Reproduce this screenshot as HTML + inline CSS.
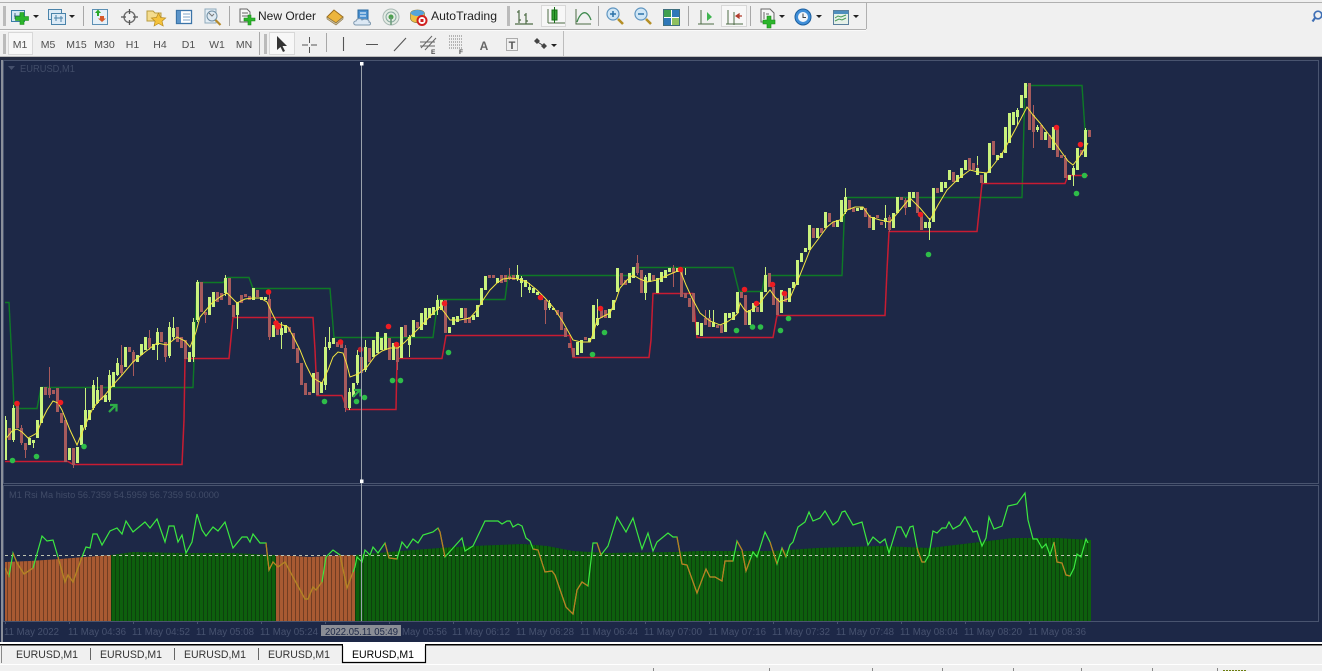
<!DOCTYPE html>
<html><head><meta charset="utf-8"><title>MetaTrader EURUSD,M1</title>
<style>html,body{margin:0;padding:0;background:#f0f0f0;width:1322px;height:671px;overflow:hidden}svg{display:block}text{font-family:"Liberation Sans",sans-serif}</style></head>
<body>
<svg xmlns="http://www.w3.org/2000/svg" width="1322" height="671" viewBox="0 0 1322 671">
<defs>
<pattern id="st" width="4" height="10" patternUnits="userSpaceOnUse"><rect x="3" width="1" height="10" fill="#000" opacity=".32"/></pattern>
<filter id="b" x="0" y="0" width="100%" height="100%"><feGaussianBlur stdDeviation=".35"/></filter>
</defs>
<rect width="1322" height="671" fill="#f0f0f0"/>
<!-- toolbars frame -->
<path d="M0 2.500H1322M0 29.500H866M866.500 3V29" fill="none" stroke="#b0b0b0"/>
<path d="M0 30.500H866" stroke="#fafafa"/>
<path d="M563.500 31V56M0 56.500H1322" stroke="#bcbcbc" fill="none"/>
<g fill="#bbb"><rect x="3" y="6" width="3" height="20"/><rect x="3" y="34" width="3" height="20"/><rect x="264" y="34" width="3" height="20"/><rect x="507" y="6" width="3" height="20"/></g>
<g stroke="#a8a8a8"><path d="M83.500 6V26M229.500 6V26M598.500 6V26M688.500 6V26M750.500 6V26M259.500 32V55M326.500 33V52"/></g>
<!-- pressed boxes -->
<g fill="#f7f7f7" stroke="#d8d8d8"><rect x="8.500" y="32.500" width="24" height="22"/><rect x="269.500" y="32.500" width="25" height="22"/><rect x="541.500" y="5.500" width="24" height="21"/><rect x="721.500" y="5.500" width="25" height="21"/></g>
<!-- toolbar 1 icons -->
<g>
<rect x="11.500" y="10.500" width="13" height="11" fill="#d4e6f4" stroke="#3b7ea8"/><path d="M14 16h8M15 13v6M20 14v5" stroke="#45708a" fill="none"/>
<path d="M20 12.500h4v4h4.500v4H24v4h-4v-4h-4.500v-4H20z" fill="#2cb52c" stroke="#178a17" stroke-width=".6"/>
<path d="M33 15h6l-3 3z" fill="#222"/>
<rect x="48.500" y="9.500" width="13" height="10" fill="#dceaf6" stroke="#4a83aa"/><rect x="51.500" y="13.500" width="14" height="11" fill="#dceaf6" stroke="#4a83aa"/><path d="M54 18h9M56 15v6M61 16v6" stroke="#4a83aa" fill="none"/>
<path d="M69 15h6l-3 3z" fill="#222"/>
<rect x="92.500" y="9.500" width="15" height="15" fill="#e6f0f8" stroke="#5c90b5"/><path d="M95 13l3-3.500 3 3.500h-2v3h-2v-3z" fill="#2aa82a"/><path d="M100 16h4v2.500h2l-4 3.500-4-3.500h2z" fill="#d75a2a"/>
<circle cx="129.500" cy="17" r="5.500" fill="none" stroke="#6b6b6b" stroke-width="1.300"/><path d="M129.500 9v5M129.500 20v5M121 17h5M133 17h5" stroke="#555" stroke-width="1.300"/>
<path d="M147 11h6l2 2h6v8h-14z" fill="#f4dc8e" stroke="#b89b3f"/><path d="M158.500 13l2.200 4.500 5 .5-3.700 3.200 1.200 4.800-4.700-2.500-4.400 2.500 1-4.800-3.700-3.200 5-.5z" fill="#f4c23c" stroke="#b88a1e" stroke-width=".7"/>
<rect x="176.500" y="10.500" width="15" height="13" fill="#fff" stroke="#3b74a8" stroke-width="1.300"/><rect x="177" y="11" width="4" height="12" fill="#5b94c9"/><path d="M183 14h7M183 17h7M183 20h7" stroke="#7fa5c8"/>
<rect x="205" y="9" width="11" height="14" fill="#e3edf5" stroke="#8faabc"/><circle cx="212" cy="16" r="5" fill="#dfeaf2" stroke="#6f8ea3"/><path d="M215.500 20l5 5" stroke="#b58a2c" stroke-width="2.200"/><path d="M209 13l3 3 2-2" stroke="#777" fill="none"/>
<path d="M240 9h7l3 3v10h-10z" fill="#f7f7f7" stroke="#666"/><path d="M242 13h6M242 16h6" stroke="#666"/><path d="M248 15h3v3h4v3h-4v4h-3v-4h-4v-3h4z" fill="#2cb52c" stroke="#178a17" stroke-width=".6"/>
<path d="M327 17l7-7 9 7-7 6z" fill="#edb53c" stroke="#9a6c1c"/><path d="M327 17v2l9 6 7-6v-2l-7 6z" fill="#c9c0a6" stroke="#8d7540" stroke-width=".6"/>
<path d="M358 10h10v11h-10z" fill="#4a90d0" stroke="#2a6aa0"/><path d="M360 13h6M360 16h6" stroke="#fff"/><path d="M356 25c-3 0-3-4 0-4 1-3 5-3 6-1 3-2 8 0 7 2 2 0 2 3 0 3z" fill="#dce8f4" stroke="#7d97ae"/>
<circle cx="391" cy="17" r="8" fill="#e4ece4" stroke="#a9b9b4"/><circle cx="391" cy="17" r="5" fill="none" stroke="#88a8a0"/><circle cx="391" cy="17" r="2.500" fill="#4ca04c"/><path d="M391 17v8" stroke="#6a9a7a" stroke-width="1.500"/>
<path d="M410.500 13c2-4 12-4 14 0v6c-2 5-12 5-14 0z" fill="#ecc045" stroke="#8c7a3a" stroke-width=".7"/><path d="M410.500 13c2-4 12-4 14 0-2 4-12 4-14 0z" fill="#55a4db"/><circle cx="422" cy="20.500" r="4.500" fill="#fff" stroke="#d02020" stroke-width="2"/><rect x="420.500" y="19" width="3" height="3" fill="#d02020"/>
<path d="M519 10v13M519 12h-2M519 20h2M526 13v11M526 15h-2M526 21h2M515 24h18" stroke="#4d6b45" fill="none" stroke-width="1.200"/>
<path d="M548 9v14M548 23h17" stroke="#4d6b45" fill="none"/><rect x="552" y="10" width="5" height="10" fill="#35a335" stroke="#156f15"/><path d="M554.500 7v16" stroke="#156f15"/>
<path d="M576 9v15h15" stroke="#4d6b45" fill="none"/><path d="M577 22c3-9 7-10 9-9s4 4 5 7" stroke="#3f8a4f" fill="none" stroke-width="1.300"/>
<circle cx="613" cy="14" r="6" fill="#cfe6f6" stroke="#5f95c0" stroke-width="1.200"/><path d="M610 14h6M613 11v6" stroke="#2b72a8" stroke-width="1.500"/><path d="M618 19l5 5" stroke="#b58f26" stroke-width="2.600"/>
<circle cx="641" cy="14" r="6" fill="#cfe6f6" stroke="#5f95c0" stroke-width="1.200"/><path d="M638 14h6" stroke="#2b72a8" stroke-width="1.500"/><path d="M646 19l5 5" stroke="#b58f26" stroke-width="2.600"/>
<rect x="663.500" y="9.500" width="16" height="16" fill="#fff" stroke="#3f6f7f"/><rect x="664" y="10" width="7" height="7" fill="#3fa04f"/><rect x="672" y="10" width="7" height="7" fill="#2f78b8"/><rect x="664" y="18" width="7" height="7" fill="#2f78b8"/><rect x="672" y="18" width="7" height="7" fill="#8fc060"/>
<path d="M701 10v14M698 24h16" stroke="#4d6b45" fill="none"/><path d="M707 12l5 5-5 4z" fill="#3fb54f"/>
<path d="M728 10v14M734 12v13M726 24h17" stroke="#4d6b45" fill="none"/><path d="M736 16h6M736 16l3-2v4z" stroke="#b03a2a" fill="none" stroke-width="1.200"/>
<path d="M761 9h9l4 4v9h-13z" fill="#f5f5f5" stroke="#666"/><path d="M764 12v7M766 14h3" stroke="#666"/><path d="M767 16h4v4h4v4h-4v4h-4v-4h-4v-4h4z" fill="#2cb52c" stroke="#178a17" stroke-width=".6"/>
<path d="M779 15h6l-3 3z" fill="#222"/>
<circle cx="803" cy="17" r="8" fill="#3f8ed8" stroke="#1c5f9e"/><circle cx="803" cy="17" r="5" fill="#f2f6fa"/><path d="M803 13.500v4h3" stroke="#444" fill="none"/>
<path d="M816 15h6l-3 3z" fill="#222"/>
<rect x="833.500" y="10.500" width="15" height="14" fill="#e5f0e8" stroke="#5a7f9d"/><rect x="834" y="11" width="14" height="3" fill="#4f8fbe"/><path d="M835 18l3-2 3 1 5-2M835 21l4-2 3 1 4-2" stroke="#4a9a58" fill="none"/>
<path d="M853 15h6l-3 3z" fill="#222"/>
</g>
<text x="258" y="20" font-size="12" fill="#222" textLength="58" lengthAdjust="spacingAndGlyphs">New Order</text>
<text x="431" y="20" font-size="12" fill="#222" textLength="66" lengthAdjust="spacingAndGlyphs">AutoTrading</text>
<circle cx="1318" cy="15" r="3.800" fill="none" stroke="#3f6fb5" stroke-width="1.700"/><path d="M1315 18l-2.500 3.500" stroke="#3f6fb5" stroke-width="2.200"/>
<!-- toolbar 2 -->
<g font-size="10.500" fill="#505050" text-anchor="middle">
<text x="20" y="48">M1</text><text x="48" y="48">M5</text><text x="76.500" y="48">M15</text><text x="104.500" y="48">M30</text><text x="132.500" y="48">H1</text><text x="160" y="48">H4</text><text x="188.500" y="48">D1</text><text x="217" y="48">W1</text><text x="244" y="48">MN</text>
</g>
<path d="M277 36v14l3.500-3 2.500 5 2-1-2.500-5h4.500z" fill="#333"/>
<path d="M309.500 37v6M309.500 47v6M302 45h6M311 45h6" stroke="#555"/>
<path d="M343.500 37v14M366 44.500h12M394 51l12-13" stroke="#555" stroke-width="1.100" fill="none"/>
<path d="M421 48l11-12M425 50l11-12M420 42h15M420 46h15" stroke="#666" fill="none"/><text x="431" y="54" font-size="6.500" font-weight="bold" fill="#444">E</text>
<path d="M449 36h14M449 39h14M449 42h14M449 45h14M449 48h14" stroke="#777" stroke-dasharray="1 1"/><text x="459" y="54" font-size="6.500" font-weight="bold" fill="#444">F</text>
<text x="484" y="50" font-size="12" font-weight="bold" fill="#666" text-anchor="middle">A</text>
<rect x="506.500" y="38.500" width="11" height="12" fill="none" stroke="#666" stroke-dasharray="1 1"/><text x="512" y="49" font-size="11" font-weight="bold" fill="#555" text-anchor="middle">T</text>
<path d="M537 38l3 3-3 3-3-3zM544 43l3 3-3 3-3-3z" fill="#444"/><path d="M536 41l8 5" stroke="#444"/>
<path d="M551 44h6l-3 3z" fill="#222"/>
<!-- chart -->
<rect x="0" y="57" width="1322" height="585" fill="#1d2847"/>
<rect x="0" y="57" width="1322" height="3" fill="#252c40"/>
<rect x="1" y="60" width="2" height="582" fill="#8a8f9a"/>
<g fill="none" stroke="#49546f"><rect x="3.500" y="60.500" width="1315" height="423"/><rect x="3.500" y="485.500" width="1315" height="136"/></g>
<path d="M8 66h7l-3.500 4z" fill="#45506c"/>
<text x="20" y="72" font-size="10" fill="#414c68" textLength="55" lengthAdjust="spacingAndGlyphs">EURUSD,M1</text>
<g filter="url(#b)">
<!-- stop lines -->
<path fill="none" stroke="#0f7a26" stroke-width="1.400" d="M5 302.500H9L13 383 14 408.500H37L41 387.500H193L197 282.500H223L227 277.500H249L253 288.500H330L334 337.500H433L438 299.500H505L508 275.500H630L635 267.500H733L739 291.500H762L765 275.500H842L845 197.500H1022L1025 85.500H1082L1085 130.500H1090"/>
<path fill="none" stroke="#c81c30" stroke-width="1.500" d="M5 461.500H68L73 464.500H182L184 420 185 358.500H229L233 317.500H313L315 350 317 395.500H342L347 409.500H396L397 358.500H442L446 335.500H570L573 357.500H649L651 340 653 293.500H693L697 337.500H773L777 315.500H885L887 270 889 231.500H977L982 183.500H1065L1068 175.500H1088"/>
<!-- wicks -->
<path fill="none" stroke="#c8f07c" d="M5.500 416V460M13.500 405V442M33.500 440V448M85.500 388V430M93.500 380V410M97.500 377V404M109.500 370V402M117.500 358V376M157.500 328V360M169.500 322V358M173.500 317V340M193.500 318V362M197.500 280V322M225.500 275V296M237.500 302V329M281.500 322V349M329.500 327V350M325.500 337V390M349.500 388V410M357.500 350V385M365.500 340V372M409.500 335V357M437.500 295V315M517.500 265V281M521.500 276V297M529.500 283V293M549.500 300V310M597.500 299V326M645.500 275V300M685.500 268V275M709.500 310V318M713.500 310V322M765.500 267V292M845.500 188V214M885.500 205V228M929.500 218V240M977.500 156V175M1017.500 108V125M1037.500 125V132M1073.500 166V186M1085.500 128V157"/>
<path fill="none" stroke="#a85a5c" d="M49.500 367V398M21.500 425V445M25.500 443V458M73.500 448V468M121.500 345V375M133.500 350V376M149.500 330V350M165.500 342V362M205.500 312V323M269.500 290V340M345.500 345V412M397.500 343V370M509.500 268V280M545.500 300V324M637.500 255V275M673.500 265V287M705.500 310V322M889.500 215V232M977.500 165V170M1033.500 105V148M1065.500 155V178M905.500 198V215"/>
<!-- bull bodies -->
<path fill="none" stroke="#c9f27d" stroke-width="3" d="M5.500 420V460M13.500 408V440M29.500 438V445M33.500 440V443M37.500 420V438M41.500 387V423M69.500 448V460M77.500 447V463M81.500 425V445M85.500 410V427M89.500 410V420M93.500 385V408M97.500 390V403M105.500 395V402M109.500 375V400M113.500 372V387M117.500 363V375M125.500 347V367M137.500 355V362M141.500 344V355M145.500 337V350M153.500 344V350M157.500 332V345M169.500 327V356M173.500 328V337M189.500 352V362M193.500 322V357M197.500 282V320M209.500 297V315M213.500 292V307M225.500 278V293M237.500 302V315M253.500 288V300M261.500 297V300M265.500 297V300M273.500 325V337M281.500 328V335M285.500 325V333M313.500 373V393M321.500 382V393M325.500 347V385M329.500 342V348M333.500 338V344M349.500 392V408M353.500 383V397M357.500 355V383M365.500 347V370
M373.500 340V357M377.500 332V353M381.500 338V350M385.500 333V350M393.500 343V360M401.500 327V358M409.500 337V345M413.500 320V337M421.500 313V330M425.500 308V325M429.500 308V318M433.500 307V315M437.500 300V310M441.500 300V310M449.500 327V333M453.500 317V325M457.500 316V322M461.500 308V318M473.500 315V320M477.500 305V317M481.500 288V305M485.500 276V290M497.500 278V283M517.500 275V279M521.500 278V283M525.500 280V287M529.500 287V290M533.500 288V293M537.500 292V295M549.500 303V308M553.500 308V310M577.500 342V355M581.500 340V353M589.500 338V342M593.500 305V339M597.500 318V325M609.500 309V318M613.500 300V310M617.500 268V292M629.500 273V283M633.500 267V278M645.500 277V293M649.500 273V282M657.500 278V293M661.500 272V282M665.500 270V278M669.500 268V272M677.500 268V272M697.500 322V335M701.500 323V336M713.500 322V327M725.500 313V332M729.500 313V318M733.500 312V320M737.500 292V313
M749.500 310V325M753.500 303V312M761.500 292V312M765.500 275V292M781.500 290V313M789.500 288V302M793.500 282V288M797.500 260V285M801.500 253V262M805.500 248V252M809.500 225V250M817.500 228V238M825.500 212V228M837.500 220V227M841.500 200V222M845.500 197V212M857.500 208V211M861.500 207V210M873.500 217V230M885.500 218V222M893.500 213V228M897.500 197V213M909.500 192V207M913.500 192V198M925.500 222V228M929.500 222V228M933.500 188V222M941.500 182V192M945.500 182V188M949.500 170V180M957.500 175V182M961.500 168V178M965.500 160V170M977.500 168V175M985.500 173V183M989.500 143V173M997.500 155V160M1001.500 153V158M1005.500 127V153M1009.500 113V143M1013.500 112V125M1017.500 110V117M1021.500 95V108M1025.500 83V98M1037.500 127V130M1045.500 132V140M1053.500 127V150M1069.500 175V180M1073.500 168V175M1077.500 148V170M1085.500 130V157"/>
<!-- bear bodies -->
<path fill="none" stroke="#a65a5c" stroke-width="3" d="M9.500 428V440M17.500 405V428M21.500 428V443M25.500 443V450M45.500 387V395M49.500 388V395M53.500 390V394M57.500 388V412M61.500 413V423M65.500 420V462M73.500 448V465M101.500 385V400M121.500 365V373M129.500 347V352M133.500 352V362M149.500 338V348M161.500 332V342M165.500 342V357M177.500 327V342M181.500 337V348M185.500 340V359M201.500 282V312M205.500 312V315M217.500 292V302M221.500 293V300M229.500 278V305M233.500 305V317M241.500 295V303M245.500 294V297M249.500 296V300M257.500 290V297M269.500 299V337M277.500 323V335M289.500 327V332M293.500 333V349M297.500 348V363M301.500 363V385M305.500 383V395M309.500 392V395M317.500 372V395M337.500 342V347M341.500 343V348M345.500 348V408M361.500 357V373M369.500 348V362
M389.500 338V360M397.500 343V362M405.500 325V337M417.500 322V328M445.500 300V333M465.500 308V323M469.500 317V323M489.500 275V278M493.500 275V278M501.500 275V283M505.500 275V282M509.500 276V279M513.500 275V280M541.500 295V300M545.500 300V310M557.500 310V315M561.500 312V330M565.500 328V337M569.500 343V348M573.500 348V357M585.500 337V340M601.500 310V318M605.500 310V318M621.500 273V285M625.500 280V285M637.500 263V273M641.500 270V293M653.500 275V280M673.500 268V273M681.500 270V297M685.500 293V298M689.500 298V307M693.500 293V322M705.500 318V325M709.500 318V327M717.500 325V328M721.500 325V333
M741.500 292V298M745.500 295V325M757.500 307V312M769.500 273V287M773.500 287V305M777.500 298V315M785.500 292V302M813.500 228V238M821.500 228V233M829.500 213V222M833.500 222V227M849.500 200V210M853.500 208V212M865.500 208V217M869.500 215V228M877.500 215V218M881.500 222V225M889.500 217V230M901.500 197V200M905.500 200V208M917.500 192V213M921.500 215V230M937.500 188V193M953.500 172V182M969.500 158V170M973.500 163V170M981.500 175V183M993.500 141V155M1029.500 83V130M1033.500 115V132M1041.500 125V140M1049.500 135V148M1057.500 127V157M1061.500 155V158M1065.500 158V178M1081.500 150V155M1089.500 130V137"/>
<!-- MA -->
<path fill="none" stroke="#f4e640" stroke-width="1" d="M5 440 12 431 17 429 22 432 28 438 37 433 42 420 47 410 53 401 58 403 62 410 70 430 77 445 84 428 92 410 97 403 105 395 113 385 122 375 133 362 145 352 157 343 167 345 177 337 185 341 190 347 196 332 200 317 212 303 220 297 227 293 232 298 237 303 245 299 253 298 260 298 267 302 272 313 277 323 288 327 294 338 300 350 306 365 312 377 318 381 322 383 328 370 333 357 338 352 343 353 347 365 350 377 358 374 367 367 375 356 382 351 390 348 398 348 405 342 410 337 420 327 433 313 440 307 445 313 450 320 460 320 470 318 477 310 483 300 490 290 497 283 503 279 510 278 518 279 527 282 537 290 545 298 553 307 563 322 573 340 581 342 590 342 594 331 597 320 604 316 610 313 616 300 620 288 627 280 633 275 640 279 647 282 652 281 657 280 668 275 680 270 686 285 692 298 700 313 710 321 720 325 727 322 733 318 738 313 740 303 744 309 747 312 753 309 760 303 765 296 770 290 775 297 780 302 785 300 790 298 800 275 810 250 819 238 827 227 833 222 840 220 847 210 855 207 863 207 870 217 880 220 890 222 900 210 910 198 920 208 930 220 938 205 947 190 958 179 970 170 978 172 987 173 995 163 1003 152 1015 130 1027 107 1033 115 1040 123 1050 136 1060 150 1068 161 1073 165 1080 156 1088 143"/>
<!-- green dots -->
<g fill="#2fbd48"><circle cx="12.500" cy="460.500" r="2.800"/><circle cx="36.500" cy="456.500" r="2.800"/><circle cx="84" cy="446.500" r="2.800"/><circle cx="324.500" cy="401.500" r="2.800"/><circle cx="356.500" cy="401.500" r="2.800"/><circle cx="364.500" cy="397.500" r="2.800"/><circle cx="392.500" cy="380.500" r="2.800"/><circle cx="400.500" cy="380.500" r="2.800"/><circle cx="448.500" cy="352.500" r="2.800"/><circle cx="592.500" cy="354.500" r="2.800"/><circle cx="604.500" cy="332.500" r="2.800"/><circle cx="736.500" cy="330.500" r="2.800"/><circle cx="752.500" cy="327" r="2.800"/><circle cx="760.500" cy="327" r="2.800"/><circle cx="780.500" cy="330.500" r="2.800"/><circle cx="788.500" cy="318.500" r="2.800"/><circle cx="928.500" cy="254.500" r="2.800"/><circle cx="1076.500" cy="193.500" r="2.800"/><circle cx="1084.500" cy="175.500" r="2.800"/></g>
<!-- red dots -->
<g fill="#ee1a22"><circle cx="17" cy="403.500" r="2.800"/><circle cx="60.500" cy="402.500" r="2.800"/><circle cx="268.500" cy="292" r="2.800"/><circle cx="276" cy="323" r="2.800"/><circle cx="278" cy="326.500" r="3.200"/><circle cx="340.500" cy="342" r="2.800"/><circle cx="360.500" cy="349.500" r="2.800" opacity=".75"/><circle cx="388.500" cy="326.500" r="2.800"/><circle cx="396.500" cy="344.500" r="2.800"/><circle cx="444.500" cy="303.500" r="2.800"/><circle cx="540.500" cy="297.500" r="2.800"/><circle cx="600.500" cy="308.500" r="2.800"/><circle cx="680.500" cy="269.500" r="2.800"/><circle cx="744.500" cy="289.500" r="2.800"/><circle cx="756.500" cy="303.500" r="2.800"/><circle cx="772.500" cy="284.500" r="2.800"/><circle cx="784.500" cy="293.500" r="2.800"/><circle cx="920.500" cy="214.500" r="2.800"/><circle cx="1056.500" cy="127.500" r="2.800"/><circle cx="1080.500" cy="144.500" r="2.800"/></g>
<!-- arrows -->
<g fill="none" stroke="#2fae46" stroke-width="2.200"><path d="M109 412l7-7M110 405h6.500v6.500"/><path d="M353 397l7-7M354 390h6.500v6.500"/></g>
<!-- histogram -->
<path fill="#a85a33" d="M5 621V562L30 561 60 559 85 557 111 555V621Z"/>
<path fill="#a85a33" d="M276 621V555L310 557 328 556 355 555V621Z"/>
<path fill="#0a5f10" d="M111 621V555L133 552 180 553 233 553 273 555 276 555V621Z"/>
<path fill="#0a5f10" d="M355 621V555L400 551 440 548 473 546 523 544 547 546 573 551 607 553 673 552 700 551 773 551 817 548 880 546 930 548 980 542 1013 538 1057 538 1091 540V621Z"/>
<path fill="url(#st)" d="M5 621V562L30 561 60 559 85 557 111 555 133 552 180 553 233 553 273 555 310 557 328 556 355 555 400 551 440 548 473 546 523 544 547 546 573 551 607 553 673 552 700 551 773 551 817 548 880 546 930 548 980 542 1013 538 1057 538 1091 540V621Z"/>
<path d="M5 555.500H1088" stroke="#bfc4b2" stroke-dasharray="3 3"/>
<!-- RSI -->
<path fill="none" stroke="#3be83f" stroke-width="1.200" d="M5 568 9 576 13 553 17 563 24 574 33 568 42 536 47 541 53 540 58 557 65 582 68 575 73 582 82 557 86 547 90 548 93 534 97 534 102 545 110 531 117 528 122 534 126 521 133 532 145 522 150 528 157 519 165 542 169 526 174 526 178 542 182 535 186 553 192 542 197 514 202 530 206 536 213 527 218 531 225 522 233 548 242 537 247 537 250 542 253 534 260 543 266 543 269 570 273 562 278 567 285 562 293 577 305 599 308 599 313 587 316 590 322 582 326 557 333 550 340 555 347 588 355 567 357 557 362 562 365 550 370 555 373 547 378 553 385 543 389 558 397 559 402 542 407 548 413 539 418 543 423 535 433 532 438 528 440 532 445 557 462 538 465 551 473 546 485 521 498 521 502 524 507 521 510 521 513 527 518 524 522 526 526 538 530 541 533 549 538 550 545 572 552 571 555 575 566 607 573 614 577 590 582 582 588 586 593 543 597 543 601 555 608 546 617 517 626 532 633 518 642 549 648 533 653 551 657 542 668 533 673 537 677 537 682 564 687 565 697 593 706 569 710 577 715 577 722 581 725 561 733 561 737 541 742 550 746 571 753 552 757 557 765 532 770 542 777 564 782 548 786 557 790 545 793 542 798 527 805 522 809 512 813 521 820 518 825 511 833 525 838 521 842 512 845 511 853 525 862 522 868 545 873 537 880 543 885 539 889 553 897 527 901 527 906 537 910 527 913 526 918 552 922 562 925 562 929 555 933 531 937 533 942 528 946 528 949 522 953 529 960 525 965 517 973 532 977 531 982 546 986 538 989 517 994 529 1002 526 1008 506 1017 504 1025 493 1028 520 1033 539 1037 539 1042 548 1046 544 1050 555 1054 542 1057 562 1062 563 1066 575 1070 576 1074 568 1077 554 1081 557 1086 539 1088 543"/>
<g fill="none" stroke="#c07a20" stroke-width="1.200"><path d="M5 568 9 576M13 553 17 563 24 574 33 568"/><path d="M58 557 65 582 68 575 73 582 82 557"/><path d="M266 543 269 570 273 562 278 567 285 562 293 577 305 599 308 599 313 587 316 590 322 582"/><path d="M340 555 347 588 353 572"/><path d="M385 543 389 558 397 559"/><path d="M438 528 440 532 445 557"/><path d="M533 549 538 550 545 572 552 571 555 575 566 607 573 614 577 590 582 582 588 586"/><path d="M597 543 601 555"/><path d="M677 537 682 564 687 565 697 593 706 569 710 577 715 577 722 581 725 561 733 561"/><path d="M737 541 742 550 746 571 750 560"/><path d="M770 542 777 564"/><path d="M782 548 786 557"/><path d="M917 548 922 562 925 562"/><path d="M1054 542 1057 562 1062 563 1066 575 1070 576"/></g>
</g>
<!-- crosshair -->
<path d="M361.500 63V621" stroke="#9aa2ac"/>
<rect x="360" y="62" width="3.500" height="3.500" fill="#fff"/><rect x="360" y="479.500" width="3.500" height="3.500" fill="#fff"/>
<text x="9" y="498" font-size="9.500" fill="#414c68" textLength="210" lengthAdjust="spacingAndGlyphs">M1 Rsi Ma histo 56.7359 54.5959 56.7359 50.0000</text>
<!-- time axis -->
<path d="M5.500 621v3M69.500 621v3M133.500 621v3M197.500 621v3M261.500 621v3M325.500 621v3M389.500 621v3M453.500 621v3M517.500 621v3M581.500 621v3M645.500 621v3M709.500 621v3M773.500 621v3M837.500 621v3M901.500 621v3M965.500 621v3M1029.500 621v3" stroke="#49546f"/>
<g font-size="10" fill="#47526f">
<text x="4" y="635" textLength="55" lengthAdjust="spacingAndGlyphs">11 May 2022</text>
<text x="68" y="635" textLength="58" lengthAdjust="spacingAndGlyphs">11 May 04:36</text>
<text x="132" y="635" textLength="58" lengthAdjust="spacingAndGlyphs">11 May 04:52</text>
<text x="196" y="635" textLength="58" lengthAdjust="spacingAndGlyphs">11 May 05:08</text>
<text x="260" y="635" textLength="58" lengthAdjust="spacingAndGlyphs">11 May 05:24</text>
<text x="402" y="635" textLength="45" lengthAdjust="spacingAndGlyphs">May 05:56</text>
<text x="452" y="635" textLength="58" lengthAdjust="spacingAndGlyphs">11 May 06:12</text>
<text x="516" y="635" textLength="58" lengthAdjust="spacingAndGlyphs">11 May 06:28</text>
<text x="580" y="635" textLength="58" lengthAdjust="spacingAndGlyphs">11 May 06:44</text>
<text x="644" y="635" textLength="58" lengthAdjust="spacingAndGlyphs">11 May 07:00</text>
<text x="708" y="635" textLength="58" lengthAdjust="spacingAndGlyphs">11 May 07:16</text>
<text x="772" y="635" textLength="58" lengthAdjust="spacingAndGlyphs">11 May 07:32</text>
<text x="836" y="635" textLength="58" lengthAdjust="spacingAndGlyphs">11 May 07:48</text>
<text x="900" y="635" textLength="58" lengthAdjust="spacingAndGlyphs">11 May 08:04</text>
<text x="964" y="635" textLength="58" lengthAdjust="spacingAndGlyphs">11 May 08:20</text>
<text x="1028" y="635" textLength="58" lengthAdjust="spacingAndGlyphs">11 May 08:36</text>
</g>
<rect x="321" y="625" width="80" height="11" fill="#8a8d95"/>
<text x="325" y="635" font-size="10" fill="#1d2847" textLength="73" lengthAdjust="spacingAndGlyphs">2022.05.11 05:49</text>
<!-- tabs -->
<rect y="642" width="1322" height="2" fill="#fff"/>
<rect y="644" width="1322" height="1.500" fill="#000"/>
<rect y="664" width="1322" height="1" fill="#fff"/>
<path d="M1.500 645V663" stroke="#888"/>
<path d="M90.500 648V660M174.500 648V660M258.500 648V660" stroke="#666"/>
<path d="M342.500 644V662.500H425.500V644" fill="#fff" stroke="#000" stroke-width="1.200"/>
<rect x="343" y="643" width="82" height="3" fill="#fff"/>
<g font-size="11" fill="#333">
<text x="16" y="658" textLength="62" lengthAdjust="spacingAndGlyphs">EURUSD,M1</text>
<text x="100" y="658" textLength="62" lengthAdjust="spacingAndGlyphs">EURUSD,M1</text>
<text x="184" y="658" textLength="62" lengthAdjust="spacingAndGlyphs">EURUSD,M1</text>
<text x="268" y="658" textLength="62" lengthAdjust="spacingAndGlyphs">EURUSD,M1</text>
<text x="352" y="658" textLength="62" lengthAdjust="spacingAndGlyphs" fill="#000">EURUSD,M1</text>
</g>
<!-- status -->
<path d="M653.500 668V671M769.500 668V671M872.500 668V671M942.500 668V671M1013.500 668V671M1081.500 668V671M1152.500 668V671M1217.500 668V671" stroke="#888"/>
<path d="M1223 670.500H1246" stroke="#6d7f10" stroke-dasharray="2 1"/>
</svg>
</body></html>
